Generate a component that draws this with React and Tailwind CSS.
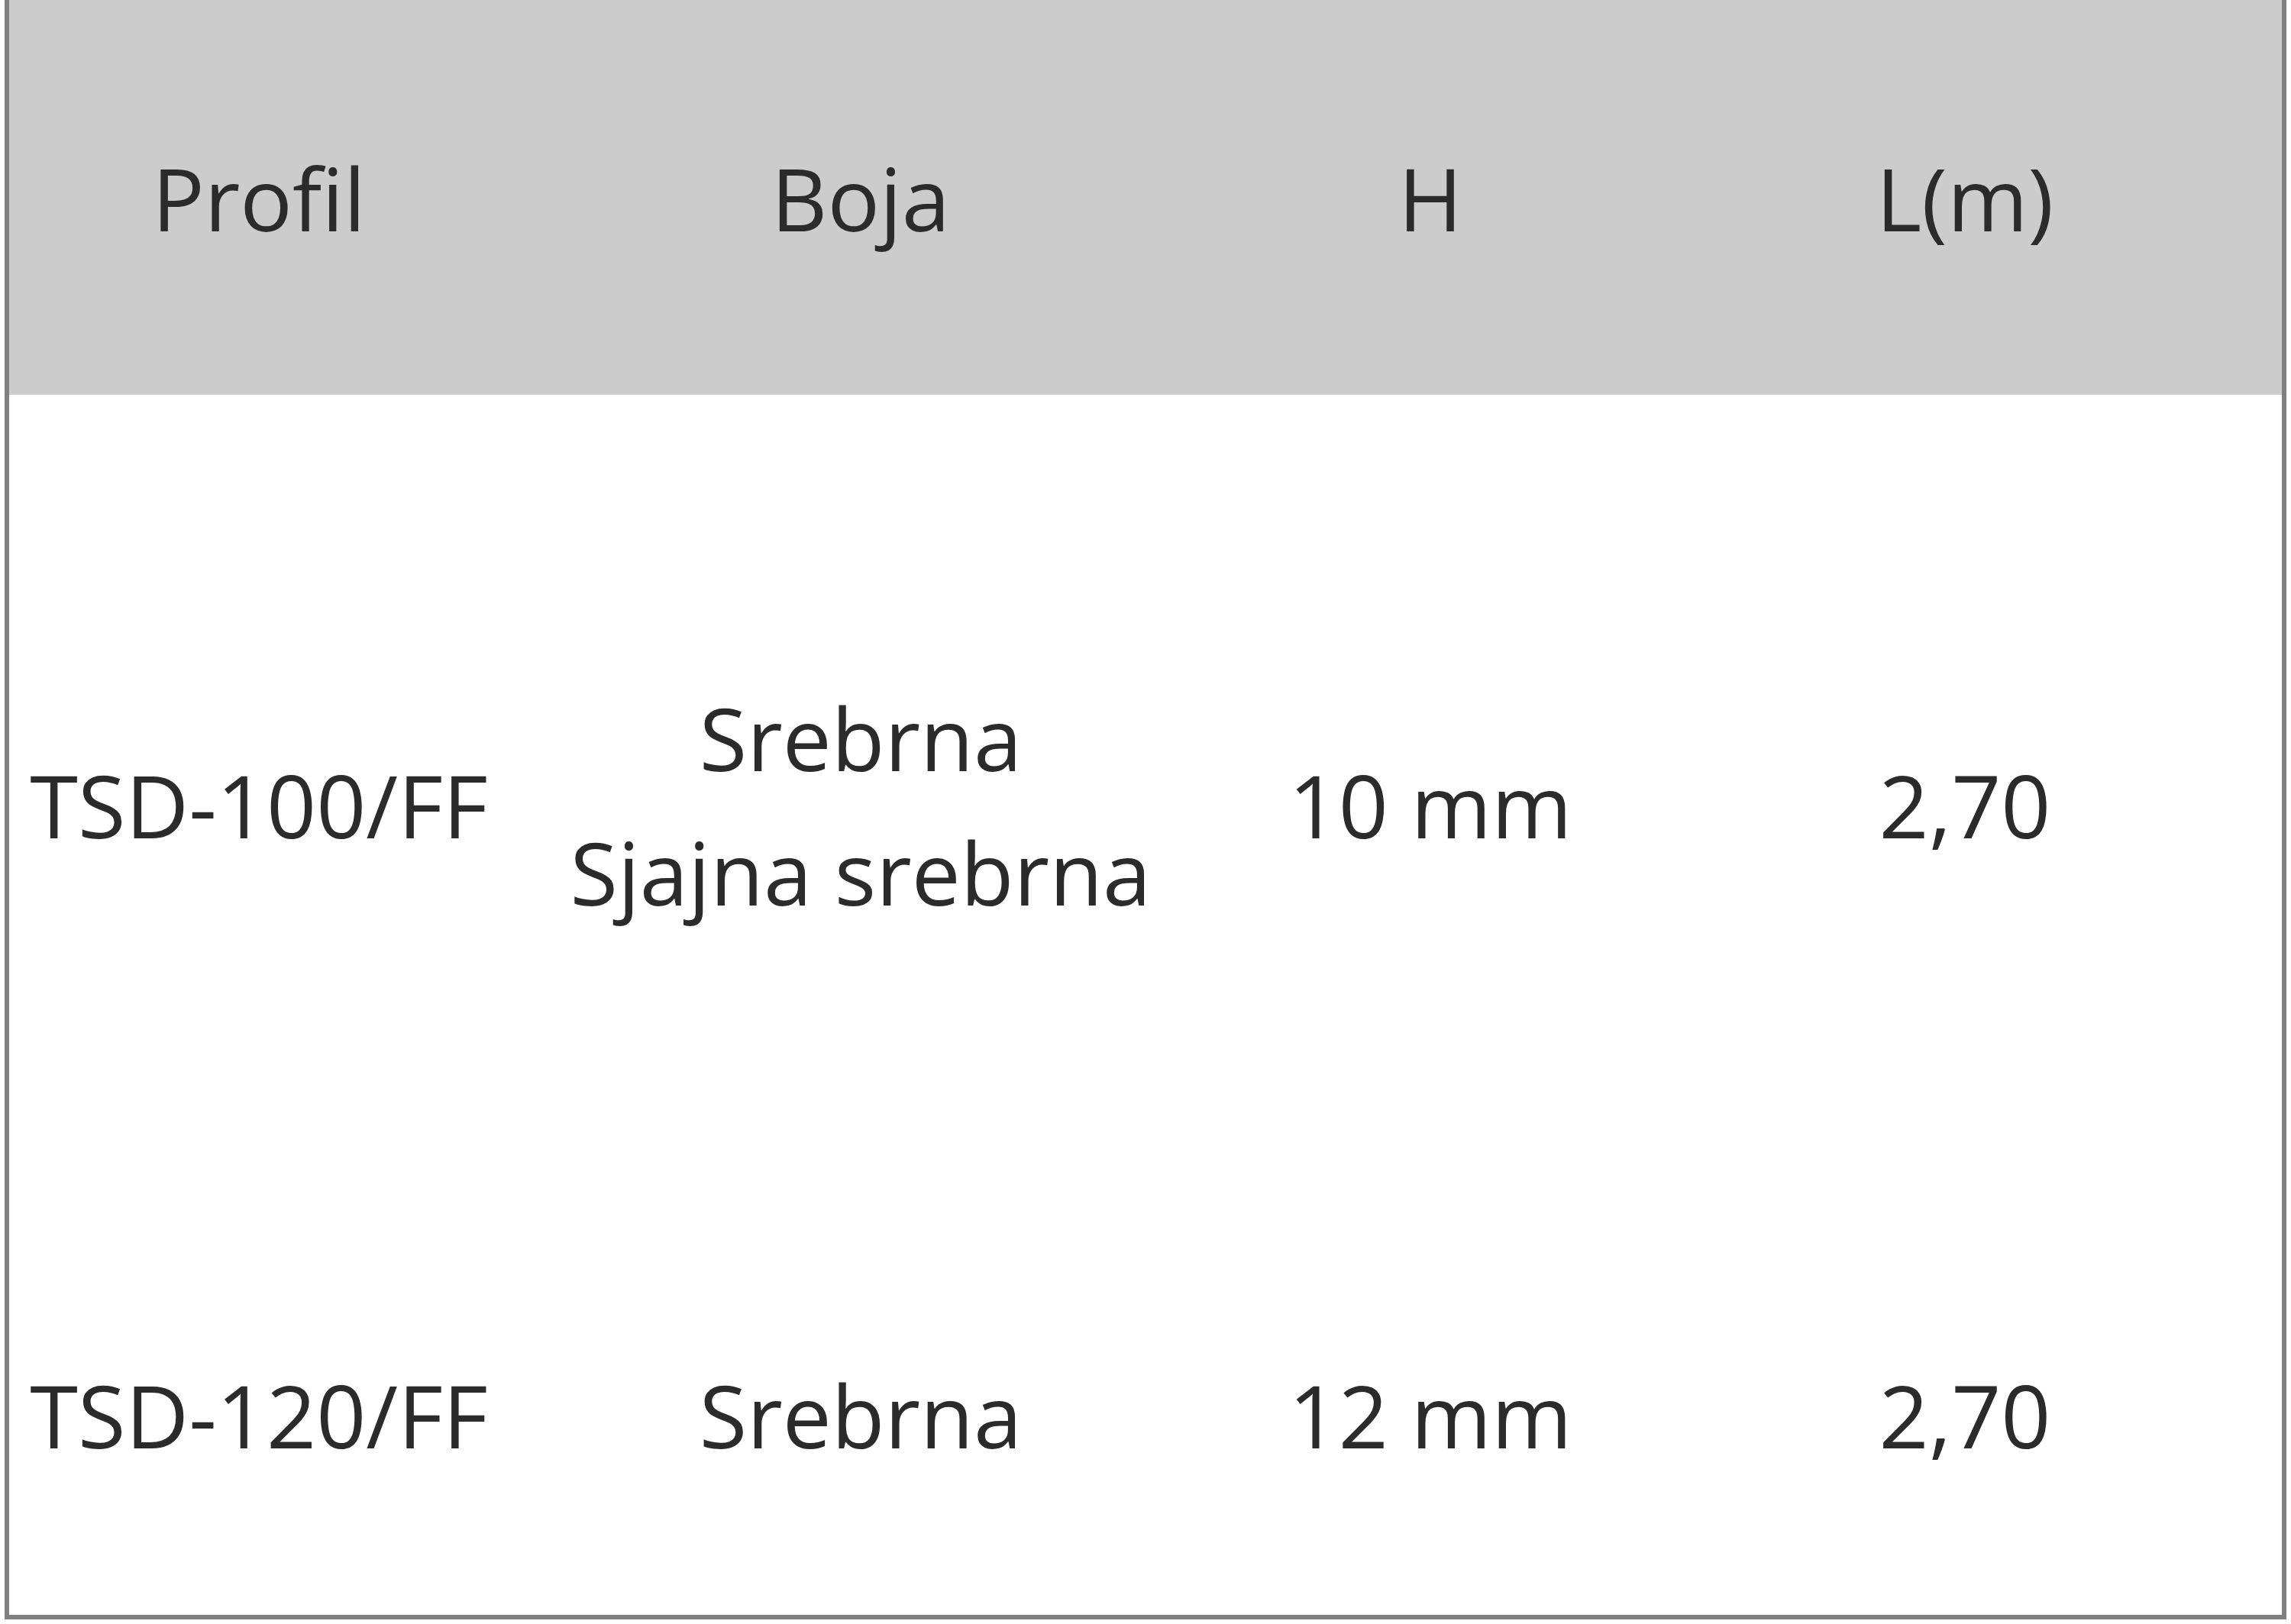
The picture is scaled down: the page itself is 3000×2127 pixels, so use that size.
const columns = ["Profil", "Boja", "H", "L(m)"];

const rows = [
  { profil: "TSD-100/FF", boja: ["Srebrna", "Sjajna srebrna"], h: "10 mm", l: "2,70", height: "h-[1080px]" },
  { profil: "TSD-120/FF", boja: ["Srebrna"], h: "12 mm", l: "2,70", height: "h-[518px]" },
];

export default function App() {
  return (
    <div className="w-[3000px] h-[2127px] bg-white" style={{ fontFamily: '"Open Sans", "Noto Sans", sans-serif' }}>
      <div className="ml-[6px] w-[2988px] border-x-[6px] border-b-[6px] border-[#808080]">
        <table className="w-full table-fixed border-collapse text-[114px] leading-[176px] text-[#2b2b2b]">
          <colgroup>
            <col className="w-[654px]" />
            <col className="w-[922px]" />
            <col className="w-[570px]" />
            <col className="w-[830px]" />
          </colgroup>
          <thead>
            <tr className="h-[517px] bg-[#cccccc]">
              {columns.map((c) => (
                <th key={c} className="font-normal text-center align-middle p-0">
                  {c}
                </th>
              ))}
            </tr>
          </thead>
          <tbody>
            {rows.map((r) => (
              <tr key={r.profil} className={r.height}>
                <td className="text-center align-middle p-0 pb-[6px] whitespace-nowrap">{r.profil}</td>
                <td className="text-center align-middle p-0 pb-[6px] whitespace-nowrap">
                  {r.boja.map((b) => (
                    <div key={b}>{b}</div>
                  ))}
                </td>
                <td className="text-center align-middle p-0 pb-[6px]">{r.h}</td>
                <td className="text-center align-middle p-0 pb-[6px]">{r.l}</td>
              </tr>
            ))}
          </tbody>
        </table>
      </div>
    </div>
  );
}
